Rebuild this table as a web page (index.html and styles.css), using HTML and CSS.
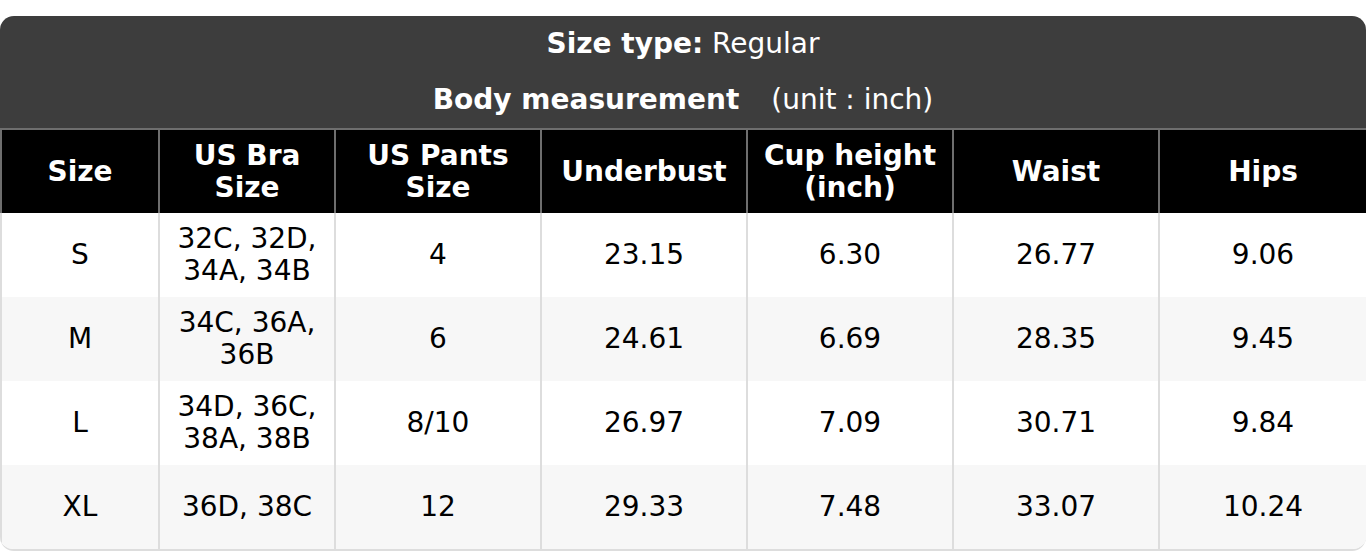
FILE: index.html
```html
<!DOCTYPE html>
<html>
<head>
<meta charset="utf-8">
<link rel="stylesheet" href="styles.css">
</head>
<body>
<div class="chart">
  <div class="caption">
    <div class="cap-line"><b>Size type:</b> Regular</div>
    <div class="cap-line"><b>Body measurement</b><span class="unit">(unit : inch)</span></div>
  </div>
  <table class="sizes">
    <colgroup>
      <col class="c1"><col class="c2"><col class="c3"><col class="c4"><col class="c5"><col class="c6"><col class="c7">
    </colgroup>
    <thead>
      <tr>
        <th>Size</th>
        <th>US Bra<br>Size</th>
        <th>US Pants<br>Size</th>
        <th>Underbust</th>
        <th>Cup height<br>(inch)</th>
        <th>Waist</th>
        <th>Hips</th>
      </tr>
    </thead>
    <tbody>
      <tr><td>S</td><td>32C, 32D,<br>34A, 34B</td><td>4</td><td>23.15</td><td>6.30</td><td>26.77</td><td>9.06</td></tr>
      <tr><td>M</td><td>34C, 36A,<br>36B</td><td>6</td><td>24.61</td><td>6.69</td><td>28.35</td><td>9.45</td></tr>
      <tr><td>L</td><td>34D, 36C,<br>38A, 38B</td><td>8/10</td><td>26.97</td><td>7.09</td><td>30.71</td><td>9.84</td></tr>
      <tr><td>XL</td><td>36D, 38C</td><td>12</td><td>29.33</td><td>7.48</td><td>33.07</td><td>10.24</td></tr>
    </tbody>
  </table>
</div>
</body>
</html>
```
FILE: styles.css
```css
html, body {
  margin: 0;
  padding: 0;
  background: #ffffff;
}
body {
  font-family: "DejaVu Sans", sans-serif;
  font-size: 28px;
  color: #000;
}
.chart {
  margin-top: 16px;
  width: 1366px;
  border-radius: 14px;
  overflow: hidden;
  box-sizing: border-box;
  border-bottom: 2px solid #dddddd;
}
.caption {
  background: #3d3d3d;
  color: #ffffff;
  text-align: center;
}
.cap-line {
  height: 56px;
  line-height: 56px;
}
.unit {
  margin-left: 32px;
}
.sizes {
  width: 1366px;
  border-collapse: collapse;
  table-layout: fixed;
}
.c1 { width: 158px; }
.c2 { width: 176px; }
.c3 { width: 206px; }
.c4 { width: 206px; }
.c5 { width: 206px; }
.c6 { width: 206px; }
.c7 { width: 208px; }
.sizes th {
  background: #000;
  color: #fff;
  font-weight: bold;
  height: 84px;
  line-height: 32px;
  padding: 0;
  border-left: 2px solid #6e6e6e;
  border-right: 2px solid #6e6e6e;
  border-top: 2px solid #6e6e6e;
  box-sizing: border-box;
  text-align: center;
  vertical-align: middle;
}
.sizes td {
  height: 84px;
  line-height: 32px;
  padding: 0;
  text-align: center;
  vertical-align: middle;
  border-left: 2px solid #dddddd;
  border-right: 2px solid #dddddd;
  box-sizing: border-box;
}
.sizes tbody tr:nth-child(odd) td { background: #ffffff; }
.sizes tbody tr:nth-child(even) td { background: #f7f7f7; }
```
